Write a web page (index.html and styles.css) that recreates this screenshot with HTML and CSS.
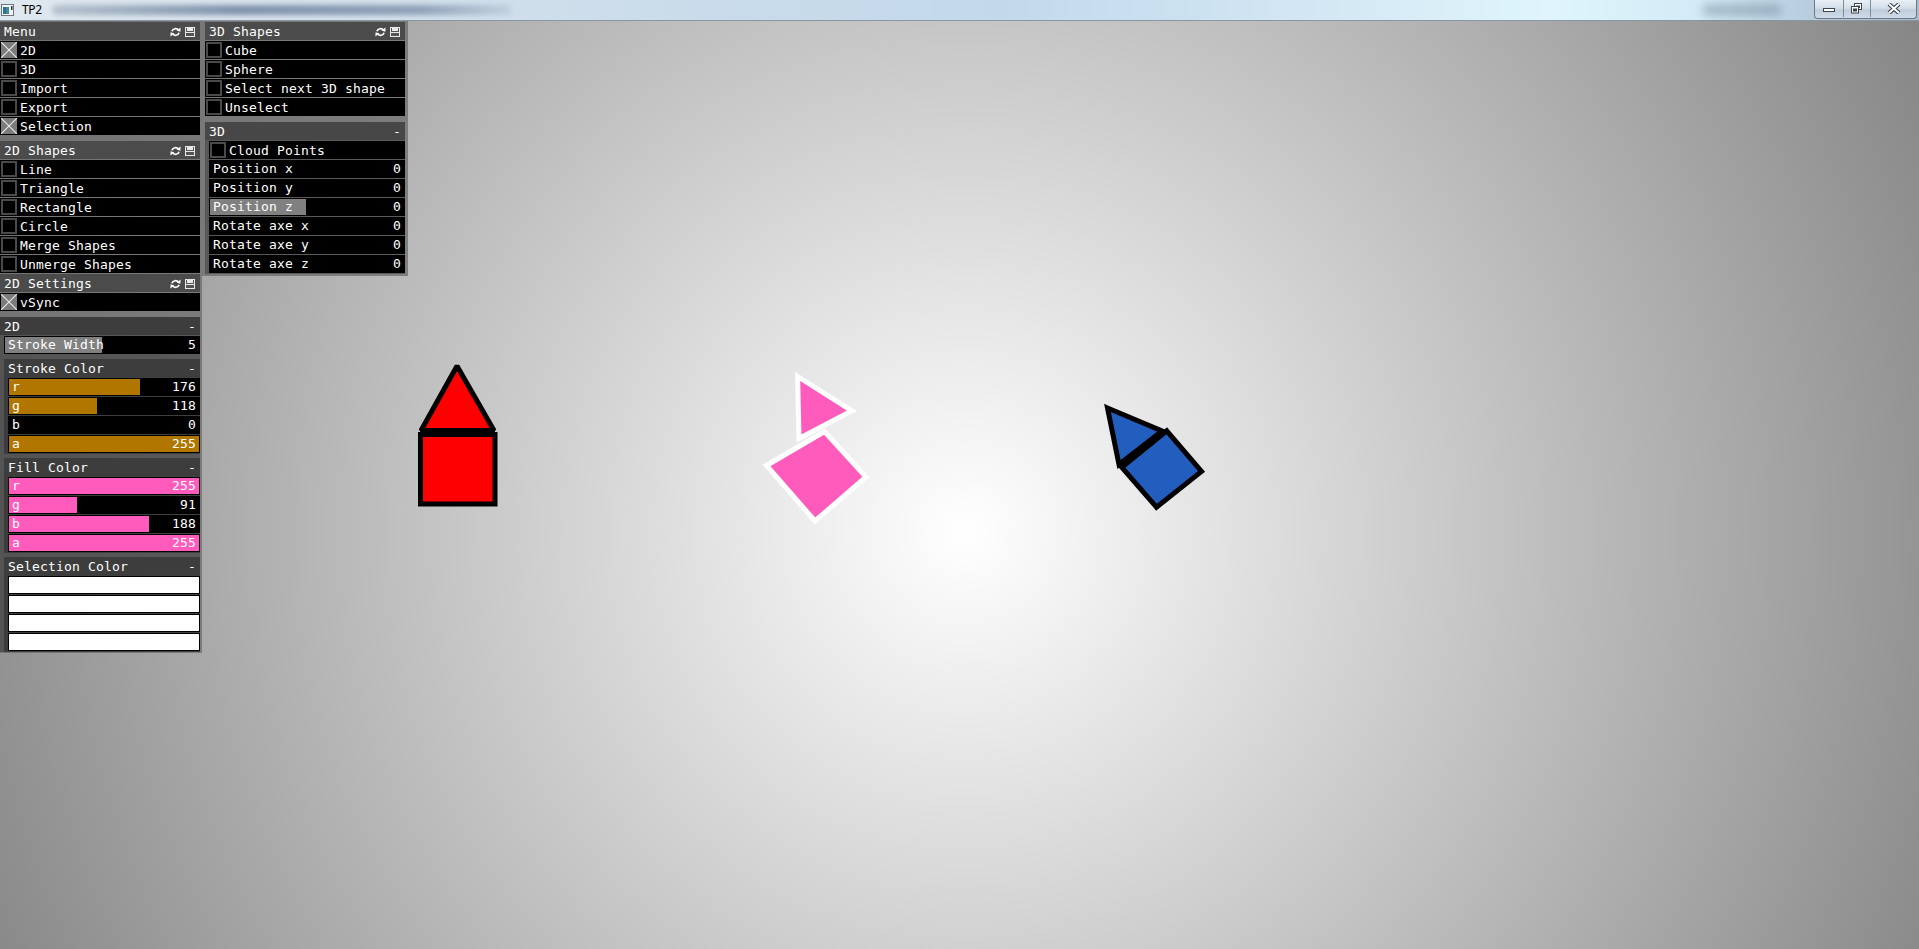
FILE: index.html
```html
<!DOCTYPE html>
<html>
<head>
<meta charset="utf-8">
<title>TP2</title>
<link rel="stylesheet" href="styles.css">
</head>
<body>
<div class="titlebar">
  <svg class="appicon" width="14" height="13" viewBox="0 0 14 13">
    <rect x="0.5" y="0.5" width="12" height="11" fill="#f4f6f8" stroke="#6d7680"/>
    <rect x="2" y="3" width="6" height="7" fill="#3f8f86"/>
    <rect x="2" y="3" width="3" height="7" fill="#2c6fa8"/>
    <rect x="10" y="2" width="1.5" height="4" fill="#333"/>
  </svg>
  <span class="title">TP2</span>
  <span class="blurpath"></span>
  <span class="blurblob"></span>
  <div class="winbtns">
    <div class="wb wmin"><svg width="14" height="8" viewBox="0 0 14 8"><rect x="1.5" y="3.5" width="11" height="3" fill="#fff" stroke="#3c4550"/></svg></div>
    <div class="wb wmax"><svg width="12" height="11" viewBox="0 0 12 11"><rect x="3.5" y="0.5" width="7" height="6" fill="#fff" stroke="#3c4550"/><rect x="5" y="2.5" width="4" height="2.5" fill="#3c4550"/><rect x="0.5" y="3.5" width="7" height="6.5" fill="#fff" stroke="#3c4550"/><rect x="2" y="5.5" width="4" height="3" fill="#3c4550"/></svg></div>
    <div class="wb wclose"><svg width="16" height="11" viewBox="0 0 16 11"><path d="M3 1 L13 10 M13 1 L3 10" stroke="#3c4550" stroke-width="4.2"/><path d="M3 1 L13 10 M13 1 L3 10" stroke="#fff" stroke-width="2"/></svg></div>
  </div>
</div>

<div class="stage">
  <svg class="shapes" width="1919" height="928" viewBox="0 21 1919 928">
    <g stroke="#000" stroke-width="5" stroke-linejoin="bevel">
      <polygon points="457,366 421,430.5 494,430.5" fill="#ff0000"/>
      <rect x="420.5" y="434.5" width="74.5" height="69.5" fill="#ff0000" stroke-linejoin="miter"/>
    </g>
    <g stroke="#fff" stroke-width="5" stroke-linejoin="miter">
      <polygon points="766.5,465.5 824.5,431.5 866,477 815,521" fill="#ff5bbc"/>
      <polygon points="797.6,376.5 852,410.8 799,438.5" fill="#ff5bbc"/>
    </g>
    <g stroke="#000" stroke-width="5" stroke-linejoin="miter">
      <polygon points="1107.5,408 1162,431 1119,464.5" fill="#225ebe"/>
      <polygon points="1166.8,430.8 1201.5,471.5 1156.5,507.2 1121.8,467.4" fill="#225ebe"/>
    </g>
  </svg>

  <div class="gui">
    <div class="col">
      <div class="panel p-menu">
        <div class="head"><span>Menu</span><span class="icons"><svg class="ico" width="11" height="10" viewBox="0 0 11 10"><path d="M8.6 3.4A3.7 3.7 0 0 0 1.9 4.3" fill="none" stroke="#fff" stroke-width="1.6"/><path d="M2.4 6.6A3.7 3.7 0 0 0 9.1 5.7" fill="none" stroke="#fff" stroke-width="1.6"/><path d="M10.6 0.6 L10.4 4.8 L6.6 3.6Z" fill="#fff"/><path d="M0.4 9.4 L0.6 5.2 L4.4 6.4Z" fill="#fff"/></svg><svg class="ico" width="10" height="10" viewBox="0 0 10 10"><rect x="0" y="0" width="10" height="10" fill="#e8e8e8"/><rect x="1" y="1" width="8" height="8" fill="#555"/><rect x="2" y="1" width="6" height="3" fill="#e8e8e8"/><rect x="1" y="5" width="8" height="1" fill="#e8e8e8"/></svg></span></div>
        <div class="row tog on"><span class="cb"></span><span class="lbl">2D</span></div>
        <div class="row tog"><span class="cb"></span><span class="lbl">3D</span></div>
        <div class="row tog"><span class="cb"></span><span class="lbl">Import</span></div>
        <div class="row tog"><span class="cb"></span><span class="lbl">Export</span></div>
        <div class="row tog on"><span class="cb"></span><span class="lbl">Selection</span></div>
      </div>

      <div class="panel p-shapes">
        <div class="head"><span>2D Shapes</span><span class="icons"><svg class="ico" width="11" height="10" viewBox="0 0 11 10"><path d="M8.6 3.4A3.7 3.7 0 0 0 1.9 4.3" fill="none" stroke="#fff" stroke-width="1.6"/><path d="M2.4 6.6A3.7 3.7 0 0 0 9.1 5.7" fill="none" stroke="#fff" stroke-width="1.6"/><path d="M10.6 0.6 L10.4 4.8 L6.6 3.6Z" fill="#fff"/><path d="M0.4 9.4 L0.6 5.2 L4.4 6.4Z" fill="#fff"/></svg><svg class="ico" width="10" height="10" viewBox="0 0 10 10"><rect x="0" y="0" width="10" height="10" fill="#e8e8e8"/><rect x="1" y="1" width="8" height="8" fill="#555"/><rect x="2" y="1" width="6" height="3" fill="#e8e8e8"/><rect x="1" y="5" width="8" height="1" fill="#e8e8e8"/></svg></span></div>
        <div class="row tog"><span class="cb"></span><span class="lbl">Line</span></div>
        <div class="row tog"><span class="cb"></span><span class="lbl">Triangle</span></div>
        <div class="row tog"><span class="cb"></span><span class="lbl">Rectangle</span></div>
        <div class="row tog"><span class="cb"></span><span class="lbl">Circle</span></div>
        <div class="row tog"><span class="cb"></span><span class="lbl">Merge Shapes</span></div>
        <div class="row tog"><span class="cb"></span><span class="lbl">Unmerge Shapes</span></div>
      </div>

      <div class="panel p-settings">
        <div class="head"><span>2D Settings</span><span class="icons"><svg class="ico" width="11" height="10" viewBox="0 0 11 10"><path d="M8.6 3.4A3.7 3.7 0 0 0 1.9 4.3" fill="none" stroke="#fff" stroke-width="1.6"/><path d="M2.4 6.6A3.7 3.7 0 0 0 9.1 5.7" fill="none" stroke="#fff" stroke-width="1.6"/><path d="M10.6 0.6 L10.4 4.8 L6.6 3.6Z" fill="#fff"/><path d="M0.4 9.4 L0.6 5.2 L4.4 6.4Z" fill="#fff"/></svg><svg class="ico" width="10" height="10" viewBox="0 0 10 10"><rect x="0" y="0" width="10" height="10" fill="#e8e8e8"/><rect x="1" y="1" width="8" height="8" fill="#555"/><rect x="2" y="1" width="6" height="3" fill="#e8e8e8"/><rect x="1" y="5" width="8" height="1" fill="#e8e8e8"/></svg></span></div>
        <div class="row tog on"><span class="cb"></span><span class="lbl">vSync</span></div>

        <div class="group g-top">
          <div class="ghead"><span>2D</span><span>-</span></div>
          <div class="gbody">
            <div class="row sl" style="--v:50%"><span>Stroke Width</span><span>5</span></div>

            <div class="group g-sub">
              <div class="ghead"><span>Stroke Color</span><span>-</span></div>
              <div class="gbody">
                <div class="row sl c-stroke" style="--v:69.02%"><span>r</span><span>176</span></div>
                <div class="row sl c-stroke" style="--v:46.27%"><span>g</span><span>118</span></div>
                <div class="row sl c-stroke" style="--v:0%"><span>b</span><span>0</span></div>
                <div class="row sl c-stroke" style="--v:100%"><span>a</span><span>255</span></div>
              </div>
            </div>

            <div class="group g-sub">
              <div class="ghead"><span>Fill Color</span><span>-</span></div>
              <div class="gbody">
                <div class="row sl c-fill" style="--v:100%"><span>r</span><span>255</span></div>
                <div class="row sl c-fill" style="--v:35.69%"><span>g</span><span>91</span></div>
                <div class="row sl c-fill" style="--v:73.73%"><span>b</span><span>188</span></div>
                <div class="row sl c-fill" style="--v:100%"><span>a</span><span>255</span></div>
              </div>
            </div>

            <div class="group g-sub">
              <div class="ghead"><span>Selection Color</span><span>-</span></div>
              <div class="gbody">
                <div class="row sl c-sel" style="--v:100%"><span>r</span><span>255</span></div>
                <div class="row sl c-sel" style="--v:100%"><span>g</span><span>255</span></div>
                <div class="row sl c-sel" style="--v:100%"><span>b</span><span>255</span></div>
                <div class="row sl c-sel" style="--v:100%"><span>a</span><span>255</span></div>
              </div>
            </div>
          </div>
        </div>
      </div>
    </div>

    <div class="col col2">
      <div class="panel p-3d">
        <div class="head"><span>3D Shapes</span><span class="icons"><svg class="ico" width="11" height="10" viewBox="0 0 11 10"><path d="M8.6 3.4A3.7 3.7 0 0 0 1.9 4.3" fill="none" stroke="#fff" stroke-width="1.6"/><path d="M2.4 6.6A3.7 3.7 0 0 0 9.1 5.7" fill="none" stroke="#fff" stroke-width="1.6"/><path d="M10.6 0.6 L10.4 4.8 L6.6 3.6Z" fill="#fff"/><path d="M0.4 9.4 L0.6 5.2 L4.4 6.4Z" fill="#fff"/></svg><svg class="ico" width="10" height="10" viewBox="0 0 10 10"><rect x="0" y="0" width="10" height="10" fill="#e8e8e8"/><rect x="1" y="1" width="8" height="8" fill="#555"/><rect x="2" y="1" width="6" height="3" fill="#e8e8e8"/><rect x="1" y="5" width="8" height="1" fill="#e8e8e8"/></svg></span></div>
        <div class="row tog"><span class="cb"></span><span class="lbl">Cube</span></div>
        <div class="row tog"><span class="cb"></span><span class="lbl">Sphere</span></div>
        <div class="row tog"><span class="cb"></span><span class="lbl">Select next 3D shape</span></div>
        <div class="row tog"><span class="cb"></span><span class="lbl">Unselect</span></div>

        <div class="group g-3d">
          <div class="ghead g3h"><span>3D</span><span>-</span></div>
          <div class="gbody">
            <div class="row tog"><span class="cb"></span><span class="lbl">Cloud Points</span></div>
            <div class="row sl" style="--v:0%"><span>Position x</span><span>0</span></div>
            <div class="row sl" style="--v:0%"><span>Position y</span><span>0</span></div>
            <div class="row sl" style="--v:49.5%"><span>Position z</span><span>0</span></div>
            <div class="row sl" style="--v:0%"><span>Rotate axe x</span><span>0</span></div>
            <div class="row sl" style="--v:0%"><span>Rotate axe y</span><span>0</span></div>
            <div class="row sl" style="--v:0%"><span>Rotate axe z</span><span>0</span></div>
          </div>
        </div>
      </div>
    </div>
  </div>
</div>
</body>
</html>
```

FILE: styles.css
```css
html, body {
  margin: 0;
  padding: 0;
}
body {
  width: 1919px;
  height: 949px;
  overflow: hidden;
  background: #888;
  font-family: "DejaVu Sans Mono", "Liberation Mono", monospace;
}

/* ---------- window title bar ---------- */
.titlebar {
  height: 21px;
  box-sizing: border-box;
  border-bottom: 1px solid #8a96a2;
  display: flex;
  align-items: center;
  background: linear-gradient(90deg, #dfe7ef 0px, #d7e2ec 300px, #c9dbea 700px, #c3d9eb 1000px, #d2e6f3 1300px, #dff5fb 1550px, #d3ebf6 1700px, #b9cfe0 1800px, #a9bccd 1919px);
}
.appicon {
  margin-left: 1px;
  flex: none;
}
.title {
  margin-left: 7px;
  font-family: "Noto Sans", "Open Sans", sans-serif;
  font-size: 12px;
  letter-spacing: -0.3px;
  color: #000;
  line-height: 20px;
}
.blurpath {
  margin-left: 10px;
  width: 460px;
  height: 10px;
  border-radius: 5px;
  background: linear-gradient(90deg, rgba(110,130,150,0.35), rgba(70,95,130,0.6) 40%, rgba(80,100,135,0.5) 80%, rgba(120,140,160,0.15));
  filter: blur(2.5px);
}
.blurblob {
  margin-left: 1190px;
  width: 80px;
  height: 12px;
  border-radius: 6px;
  background: rgba(90, 110, 130, 0.35);
  filter: blur(4px);
}
.winbtns {
  margin-left: auto;
  margin-right: 2px;
  align-self: flex-start;
  display: flex;
  height: 18px;
  border: 1px solid #6b7886;
  border-top: none;
  border-radius: 0 0 4px 4px;
  overflow: hidden;
  background: linear-gradient(180deg, #e9eff5 0%, #d4dee8 45%, #bfcddb 55%, #cfdbe6 100%);
}
.wb {
  display: flex;
  align-items: center;
  justify-content: center;
  height: 17px;
}
.wmin { width: 28px; border-right: 1px solid #7f8c99; }
.wmax { width: 26px; border-right: 1px solid #7f8c99; }
.wclose { width: 45px; }

/* ---------- canvas ---------- */
.stage {
  position: relative;
  height: 928px;
  background: radial-gradient(circle 1092px at 965px 511px, #ffffff 0%, #858585 100%);
}
.shapes {
  position: absolute;
  left: 0;
  top: 0;
}

/* ---------- ofxGui panels ---------- */
.gui {
  position: relative;
  display: flex;
  align-items: flex-start;
  color: #fff;
  font-size: 13px;
  letter-spacing: 0.17px;
}
.col {
  display: flex;
  flex-direction: column;
}
.panel {
  display: flex;
  flex-direction: column;
  background: rgba(105, 105, 105, 0.72);
  width: 200px;
}
.p-menu { padding: 1px 2px 4px 0; }
.p-shapes { padding: 1px 2px 0 0; }
.p-settings { padding: 0 2px 1px 0; }
.p-3d { padding: 1px 3px 2px 3px; }

.head, .ghead, .row {
  height: 18px;
  box-sizing: border-box;
  padding-top: 1px;
  line-height: 17px;
  margin-bottom: 1px;
  white-space: pre;
  display: flex;
  align-items: flex-start;
  flex: none;
}
.head {
  background: #4b4b4b;
  justify-content: space-between;
  padding-left: 4px;
}
.icons {
  display: flex;
  gap: 4px;
  margin-right: 5px;
  margin-top: 4px;
}
.ico { display: block; }

.ghead {
  background: #3d3d3d;
  justify-content: space-between;
  padding-left: 4px;
  padding-right: 4px;
}
.g3h { background: #474747; }

.group {
  display: flex;
  flex-direction: column;
  background: rgba(0, 0, 0, 0.28);
}
.g-top { margin-top: 5px; }
.g-sub { margin-top: 4px; }
.g-3d { margin-top: 5px; }
.gbody {
  display: flex;
  flex-direction: column;
  padding-left: 4px;
}

/* toggle */
.tog {
  background: #000;
  padding-top: 0;
  line-height: 18px;
}
.cb {
  width: 16px;
  height: 16px;
  box-sizing: border-box;
  margin: 1px 0 0 1px;
  border: 2px solid #4a4a4a;
  background: #000;
  flex: none;
}
.on .cb {
  border: none;
  background:
    linear-gradient(45deg, transparent calc(50% - 1px), #e4e4e4 50%, transparent calc(50% + 1px)),
    linear-gradient(-45deg, transparent calc(50% - 1px), #e4e4e4 50%, transparent calc(50% + 1px)),
    #7c7c7c;
}
.lbl {
  margin-left: 3px;
  padding-top: 1px;
  line-height: 17px;
}

/* slider */
.sl {
  --c: #808080;
  border: 1px solid #000;
  padding: 0 3px 0 3px;
  line-height: 16px;
  justify-content: space-between;
  background: linear-gradient(90deg, var(--c) var(--v), #000 var(--v)) padding-box, #000;
}
.c-stroke { --c: #b07600; }
.c-fill { --c: #ff5bbc; }
.c-sel { --c: #ffffff; }
```
